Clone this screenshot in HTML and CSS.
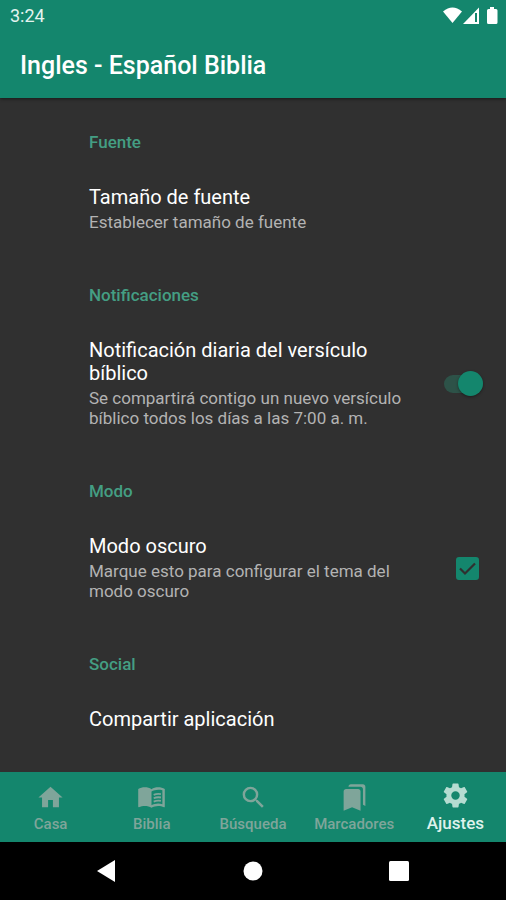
FILE: index.html
```html
<!DOCTYPE html>
<html lang="es">
<head>
    <meta charset="UTF-8">
    <meta name="viewport" content="width=device-width, initial-scale=1">
    <title>Ingles - Español Biblia</title>
    <link rel="stylesheet" href="styles.css">
</head>
<body>

<header class="top">
    <div class="status-bar">
        <span class="clock">3:24</span>
        <svg class="status-icons" width="56" height="18" viewBox="0 0 56 18" fill="#fff">
            <path d="M0 4.500Q9.500-3.500 19 4.500L9.500 16z"/>
            <path d="M20 17L36 0.500V17z"/>
            <path d="M33 6v9" stroke="#14866d" stroke-width="2"/>
            <path d="M47 0h4v2h2q1.500 0 1.500 1.500v12q0 1.500-1.500 1.500h-7.500q-1.500 0-1.500-1.500v-12q0-1.500 1.500-1.500H47z"/>
        </svg>
    </div>
    <h1 class="app-title">Ingles - Español Biblia</h1>
</header>

<main class="settings">
    <section class="group">
        <h2 class="group-name">Fuente</h2>
        <button type="button" class="setting">
            <span class="setting-text">
                <span class="setting-title">Tamaño de fuente</span>
                <span class="setting-summary">Establecer tamaño de fuente</span>
            </span>
        </button>
    </section>

    <section class="group">
        <h2 class="group-name">Notificaciones</h2>
        <label class="setting" for="daily">
            <span class="setting-text">
                <span class="setting-title">Notificación diaria del versículo bíblico</span>
                <span class="setting-summary">Se compartirá contigo un nuevo versículo bíblico todos los días a las 7:00 a. m.</span>
            </span>
            <input type="checkbox" role="switch" class="switch" id="daily" checked>
        </label>
    </section>

    <section class="group">
        <h2 class="group-name">Modo</h2>
        <label class="setting" for="dark">
            <span class="setting-text">
                <span class="setting-title">Modo oscuro</span>
                <span class="setting-summary">Marque esto para configurar el tema del modo oscuro</span>
            </span>
            <input type="checkbox" class="check" id="dark" checked>
        </label>
    </section>

    <section class="group">
        <h2 class="group-name">Social</h2>
        <button type="button" class="setting">
            <span class="setting-text">
                <span class="setting-title">Compartir aplicación</span>
            </span>
        </button>
    </section>
</main>

<nav class="tabs">
    <a class="tab" href="#casa">
        <svg viewBox="0 0 24 24"><path d="M10 20v-6h4v6h5v-8h3L12 3 2 12h3v8z"/></svg>
        <span>Casa</span>
    </a>
    <a class="tab" href="#biblia">
        <svg viewBox="0 0 24 24">
            <path d="M12 5.200C10.500 4 8.500 3.500 6.500 3.500S2.500 4 1 5v14.600c0 .3.300.5.600.4 1.400-.7 3.200-1 4.900-1 2 0 4 .4 5.500 1.500 1.400-.9 3.800-1.500 5.500-1.500 1.700 0 3.400.3 4.800 1 .3.200.7-.1.700-.4V5c-1.500-1-3.500-1.500-5.500-1.500S13.500 4 12 5.200zM21 17.500c-1.100-.3-2.300-.5-3.500-.5-1.700 0-4.200.6-5.500 1.500V7c1.300-.9 3.800-1.500 5.500-1.500 1.200 0 2.400.1 3.500.5z"/>
            <path d="M13.800 9.800q2.800-1.200 6-.6M13.800 12.600q2.800-1.200 6-.6M13.800 15.400q2.800-1.200 6-.6" fill="none" stroke="currentColor" stroke-width="1.500"/>
        </svg>
        <span>Biblia</span>
    </a>
    <a class="tab" href="#busqueda">
        <svg viewBox="0 0 24 24"><path d="M15.500 14h-.79l-.28-.27A6.470 6.470 0 0 0 16 9.500 6.500 6.500 0 1 0 9.500 16c1.610 0 3.090-.59 4.230-1.570l.27.280v.79l5 4.990L20.490 19zm-6 0a4.500 4.500 0 1 1 0-9 4.500 4.500 0 0 1 0 9z"/></svg>
        <span>Búsqueda</span>
    </a>
    <a class="tab" href="#marcadores">
        <svg viewBox="0 0 24 24"><path d="M19 18l2 1V3c0-1.100-.9-2-2-2H8.990C7.890 1 7 1.900 7 3h10c1.100 0 2 .9 2 2zM15 5H5c-1.100 0-2 .9-2 2v16l7-3 7 3V7c0-1.100-.9-2-2-2z"/></svg>
        <span>Marcadores</span>
    </a>
    <a class="tab active" href="#ajustes" aria-current="page">
        <svg viewBox="0 0 24 24"><path d="M19.430 12.980c.04-.32.070-.64.070-.98s-.03-.66-.07-.98l2.110-1.650c.19-.15.240-.42.120-.64l-2-3.460c-.12-.22-.39-.3-.61-.22l-2.490 1c-.52-.4-1.080-.73-1.690-.98l-.38-2.650A.488.488 0 0 0 14 2h-4c-.25 0-.46.180-.49.420l-.38 2.650c-.61.250-1.170.590-1.690.98l-2.490-1c-.23-.09-.49 0-.61.220l-2 3.460c-.13.220-.07.490.12.640l2.110 1.650c-.04.320-.07.650-.07.980s.03.660.070.98l-2.110 1.650c-.19.150-.24.420-.12.640l2 3.460c.12.220.39.300.61.220l2.490-1c.52.400 1.080.730 1.690.98l.38 2.650c.03.240.24.420.49.420h4c.25 0 .46-.18.490-.42l.38-2.650c.61-.25 1.170-.59 1.690-.98l2.490 1c.23.090.49 0 .61-.22l2-3.460c.12-.22.070-.49-.12-.64zM12 15.500a3.500 3.500 0 1 1 0-7 3.500 3.500 0 0 1 0 7z"/></svg>
        <span>Ajustes</span>
    </a>
</nav>

<div class="system-nav">
    <button type="button" aria-label="Atrás">
        <svg width="22" height="22" viewBox="0 0 22 22"><path d="M1 11L19 0v22z"/></svg>
    </button>
    <button type="button" aria-label="Inicio">
        <svg width="22" height="22" viewBox="0 0 22 22"><circle cx="11" cy="11" r="9.500"/></svg>
    </button>
    <button type="button" aria-label="Recientes">
        <svg width="22" height="22" viewBox="0 0 22 22"><rect x="1" y="1" width="20" height="20" rx="1.500"/></svg>
    </button>
</div>

</body>
</html>
```
FILE: styles.css
```css
* {
    box-sizing: border-box;
}
body {
    margin: 0;
    min-height: 100vh;
    display: flex;
    flex-direction: column;
    background-color: #303030;
    color: #fff;
    font-family: Roboto, sans-serif;
}
button {
    border: 0;
    padding: 0;
    background: none;
    color: inherit;
    font: inherit;
    cursor: pointer;
}

/* header */
.top {
    background-color: #14866d;
    box-shadow: 0 1px 3px rgba(0,0,0,0.5);
}
.status-bar {
    display: flex;
    justify-content: space-between;
    align-items: center;
    height: 32px;
    padding: 0 7px 0 10px;
}
.clock {
    font-size: 18px;
    line-height: 32px;
    color: #e4f3ef;
}
.app-title {
    margin: 0;
    padding: 19px 20px 17px;
    font-size: 25px;
    line-height: 30px;
    font-weight: 500;
}

/* settings list */
.settings {
    flex: 1;
    padding: 34px 23px 0 89px;
}
.group {
    margin-bottom: 53px;
}
.group:last-child {
    margin-bottom: 32px;
}
.group-name {
    margin: 0 0 34px;
    font-size: 17px;
    line-height: 20px;
    font-weight: 500;
    color: #449e83;
}
.setting {
    display: flex;
    justify-content: space-between;
    align-items: center;
    width: 100%;
    text-align: left;
    cursor: pointer;
}
.setting-text {
    display: flex;
    flex-direction: column;
    gap: 3px;
    max-width: 330px;
}
.setting-title {
    font-size: 20px;
    line-height: 23px;
}
.setting-summary {
    font-size: 17px;
    line-height: 20px;
    color: #b3b3b3;
}

.switch {
    appearance: none;
    flex: none;
    display: flex;
    align-items: center;
    justify-content: flex-end;
    width: 39px;
    height: 18px;
    margin: 0;
    border-radius: 9px;
    background-color: #2d5248;
}
.switch::before {
    content: "";
    width: 25px;
    height: 25px;
    flex: none;
    border-radius: 50%;
    background-color: #14866d;
    box-shadow: 0 1px 3px rgba(0,0,0,0.4);
}
.switch:not(:checked) {
    justify-content: flex-start;
    background-color: #555;
}
.check {
    appearance: none;
    flex: none;
    width: 23px;
    height: 23px;
    margin: 0 4px;
    border: 2px solid #14866d;
    border-radius: 3px;
}
.check:checked {
    background: #14866d url("data:image/svg+xml,%3Csvg xmlns='http://www.w3.org/2000/svg' viewBox='0 0 19 19'%3E%3Cpath d='M2 9.500l5 5L17 4.500' fill='none' stroke='%23303030' stroke-width='2.200'/%3E%3C/svg%3E") center / 19px no-repeat;
}

/* bottom tabs */
.tabs {
    display: flex;
    height: 70px;
    background-color: #14866d;
}
.tab {
    flex: 1;
    display: flex;
    flex-direction: column;
    align-items: center;
    padding-top: 11px;
    gap: 2px;
    font-size: 15px;
    line-height: 20px;
    font-weight: 500;
    color: #7fa59a;
    text-decoration: none;
}
.tab svg {
    width: 29px;
    height: 29px;
    fill: currentColor;
}
.tab.active {
    padding-top: 9px;
    gap: 3px;
    font-size: 17px;
    color: #def2ec;
}
.tab.active svg {
    color: #b5dcd1;
}

/* android buttons */
.system-nav {
    display: flex;
    justify-content: center;
    gap: 124px;
    height: 58px;
    background-color: #000;
}
.system-nav svg {
    display: block;
    fill: #fff;
}
```
